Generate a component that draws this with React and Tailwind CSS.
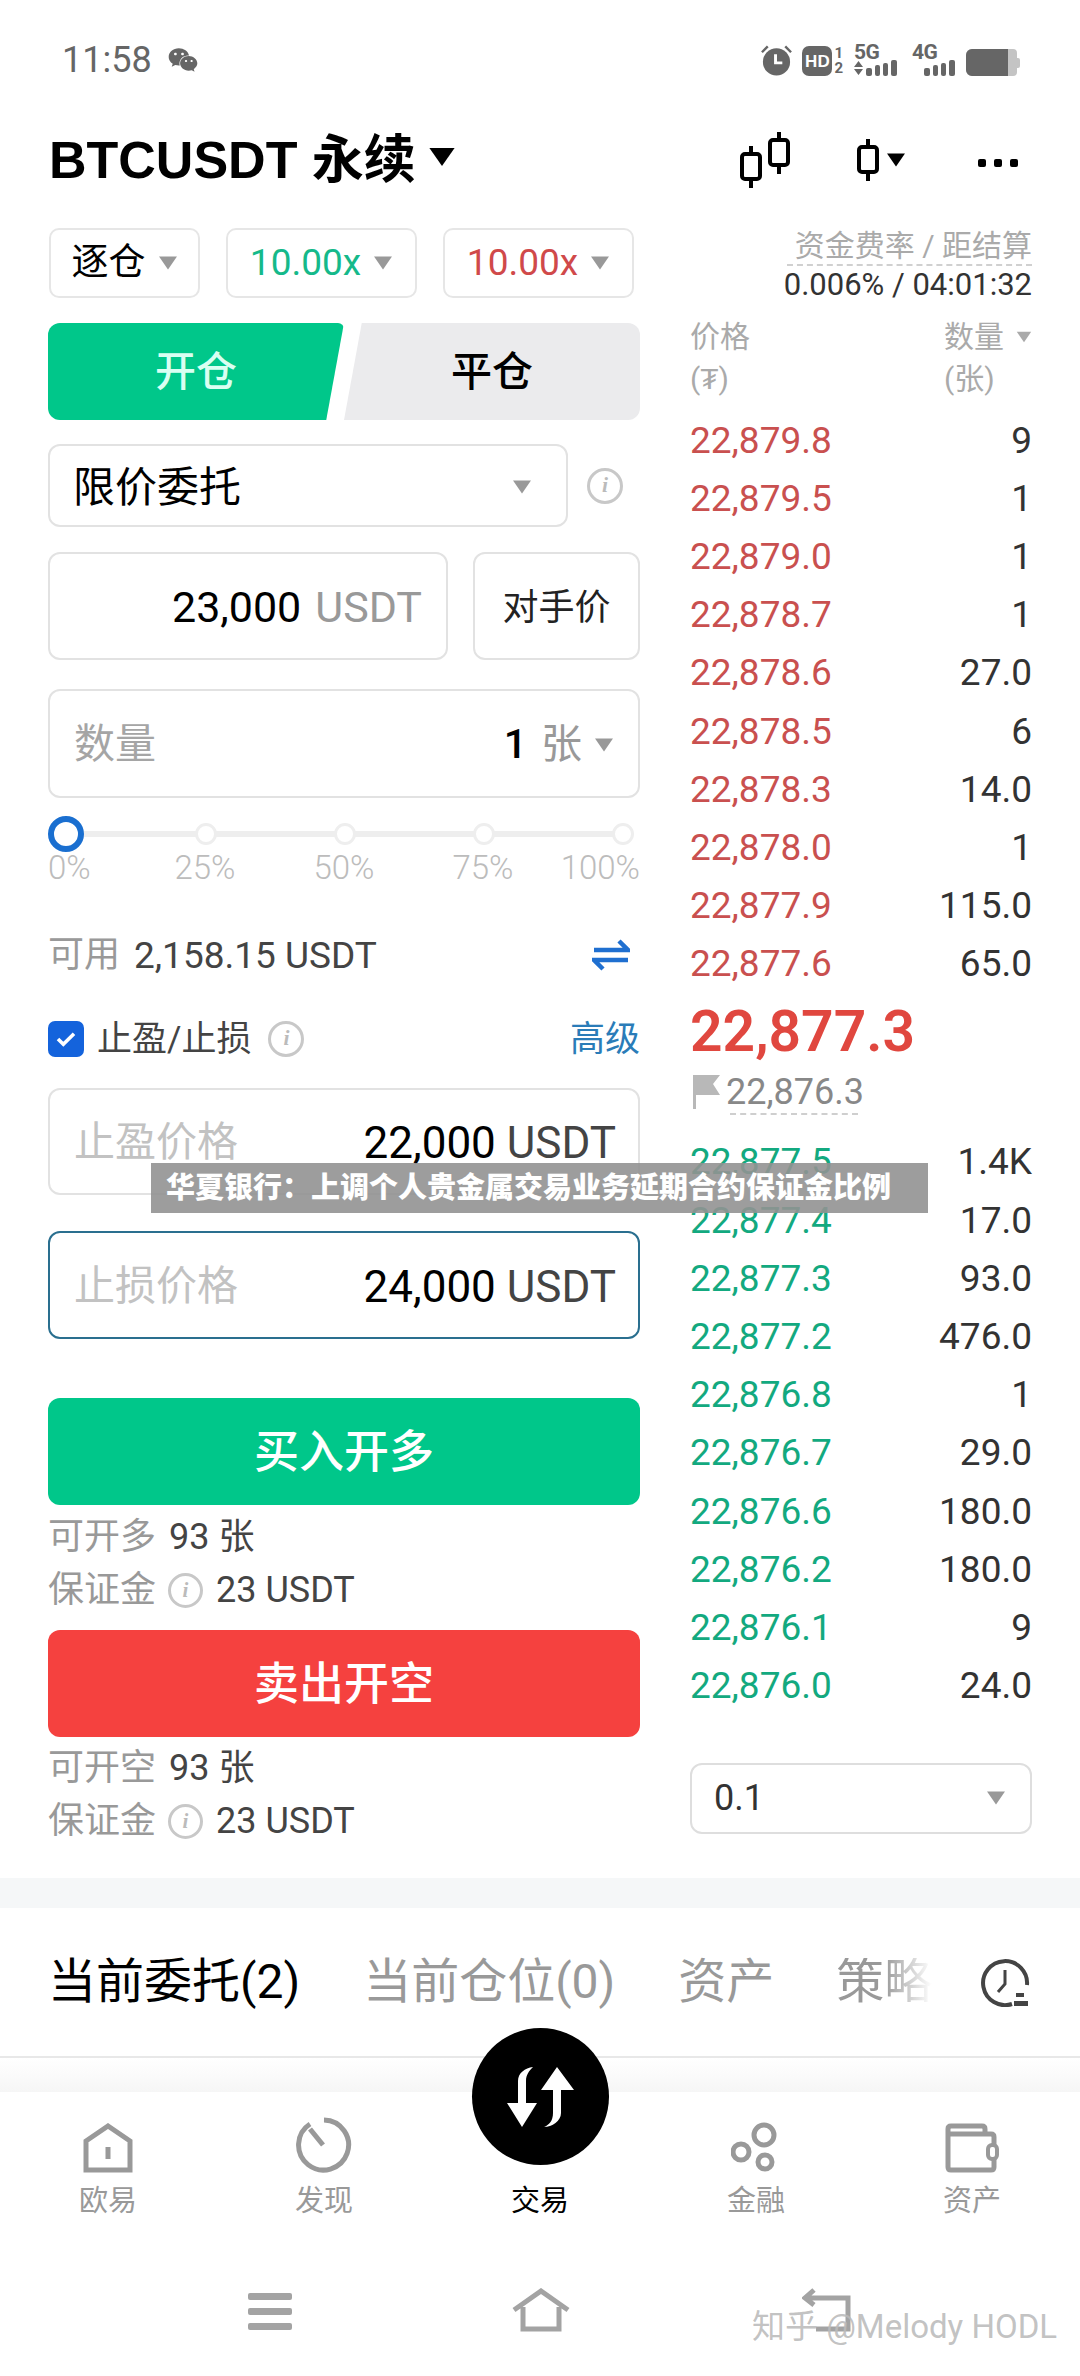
import { FaWeixin } from 'react-icons/fa';

const ASKS = [
  ['22,879.8', '9'], ['22,879.5', '1'], ['22,879.0', '1'], ['22,878.7', '1'], ['22,878.6', '27.0'],
  ['22,878.5', '6'], ['22,878.3', '14.0'], ['22,878.0', '1'], ['22,877.9', '115.0'], ['22,877.6', '65.0'],
];

const BIDS = [
  ['22,877.5', '1.4K'], ['22,877.4', '17.0'], ['22,877.3', '93.0'], ['22,877.2', '476.0'], ['22,876.8', '1'],
  ['22,876.7', '29.0'], ['22,876.6', '180.0'], ['22,876.2', '180.0'], ['22,876.1', '9'], ['22,876.0', '24.0'],
];

function Caret({ className = 'w-[20px] h-[14px] text-[#999]' }) {
  return (
    <svg viewBox="0 0 20 14" className={`shrink-0 ${className}`}>
      <path d="M1 0.5h18L10 13.5z" fill="currentColor" />
    </svg>
  );
}

function InfoIcon({ size = 36 }) {
  return (
    <span
      className="shrink-0 flex items-center justify-center rounded-full border-[3px] border-[#c8c8c8] text-[#bbb] font-['Liberation_Serif',serif] italic font-bold"
      style={{ width: size, height: size, fontSize: size * 0.6 }}
    >
      i
    </span>
  );
}

function Candle({ className }) {
  return (
    <svg viewBox="0 0 22 42" className={className}>
      <path d="M11 0v42" stroke="#000" strokeWidth="4" />
      <rect x="2" y="8" width="18" height="25" rx="3" fill="#fff" stroke="#000" strokeWidth="4" />
    </svg>
  );
}

function Bars() {
  return (
    <span className="flex items-end gap-[3px]">
      <span className="w-[6px] h-[8px] rounded-[2px] bg-[#666]" />
      <span className="w-[5px] h-[11px] rounded-[2px] bg-[#666]" />
      <span className="w-[5px] h-[13px] rounded-[2px] bg-[#666]" />
      <span className="w-[6px] h-[16px] rounded-[2px] bg-[#666]" />
    </span>
  );
}

function StatusBar() {
  return (
    <div className="h-[120px] pl-[62px] pr-[60px] flex items-center justify-between">
      <div className="flex items-center gap-[16px]">
        <span className="text-[36px] text-[#666]">11:58</span>
        <FaWeixin className="text-[30px] text-[#666]" />
      </div>
      <div className="flex items-end h-[32px]">
        <svg viewBox="0 0 34 32" className="w-[33px] h-[32px]">
          <path d="M2 8l6-6M32 8l-6-6" stroke="#666" strokeWidth="2.5" />
          <circle cx="17" cy="18" r="14" fill="#666" />
          <path d="M16 10v9h7" stroke="#fff" strokeWidth="3" fill="none" />
        </svg>
        <span className="ml-[9px] flex items-end gap-[2px]">
          <span className="w-[30px] h-[30px] rounded-[7px] bg-[#666] flex items-center justify-center text-white text-[17px] font-bold font-['Liberation_Sans',sans-serif] leading-none">HD</span>
          <span className="flex flex-col items-center text-[#666] text-[15px] font-bold leading-[15px]"><span>1</span><span>2</span></span>
        </span>
        <span className="ml-[11px] w-[45px] flex flex-col items-start text-[#666]">
          <span className="text-[21px] font-bold leading-[16px] tracking-[-0.5px]">5G</span>
          <span className="flex items-end gap-[3px]">
            <svg viewBox="0 0 9 16" className="w-[9px] h-[16px]">
              <path d="M4.5 1L9 7H0zM0 9h9l-4.500 6z" fill="#666" />
            </svg>
            <Bars />
          </span>
        </span>
        <span className="ml-[13px] w-[44px] flex flex-col items-start text-[#666]">
          <span className="text-[21px] font-bold leading-[16px] tracking-[-0.5px]">4G</span>
          <span className="ml-[12px]"><Bars /></span>
        </span>
        <span className="ml-[10px] flex items-center">
          <span className="w-[51px] h-[27px] rounded-l-[6px] flex overflow-hidden bg-[#c4c4c4] rounded-r-[4px]">
            <span className="w-[42px] bg-[#666]" />
          </span>
          <span className="w-[3px] h-[10px] bg-[#c4c4c4] rounded-r-[2px]" />
        </span>
      </div>
    </div>
  );
}

function Header() {
  return (
    <div className="h-[80px] pl-[49px] pr-[62px] flex items-center">
      <span className="text-[52px] font-bold text-black font-['Liberation_Sans','Noto_Sans_CJK_SC',sans-serif] leading-none">BTCUSDT 永续</span>
      <Caret className="w-[28px] h-[20px] text-black ml-[12px] -mt-[6px]" />
      <div className="ml-auto flex items-center">
        <span className="relative w-[50px] h-[56px] block">
          <Candle className="absolute left-0 bottom-0 w-[22px] h-[42px]" />
          <Candle className="absolute right-0 top-0 w-[22px] h-[42px]" />
        </span>
        <Candle className="w-[22px] h-[42px] ml-[67px]" />
        <Caret className="w-[20px] h-[14px] text-black ml-[7px]" />
        <span className="flex gap-[8px] ml-[72px] mt-[6px]">
          <span className="w-[8px] h-[8px] rounded-[2px] bg-black" />
          <span className="w-[8px] h-[8px] rounded-[2px] bg-black" />
          <span className="w-[8px] h-[8px] rounded-[2px] bg-black" />
        </span>
      </div>
    </div>
  );
}

function Pill({ className, children }) {
  return (
    <div className={`h-[70px] border-2 border-[#e6e6e6] rounded-[10px] flex items-center justify-center gap-[12px] text-[37px] ${className}`}>
      {children}
      <Caret />
    </div>
  );
}

function Field({ className = '', children }) {
  return (
    <div className={`border-2 border-[#e2e2e2] rounded-[12px] pt-[3px] flex items-center ${className}`}>
      {children}
    </div>
  );
}

function Slider() {
  return (
    <div className="mt-[18px]">
      <div className="relative h-[36px] flex items-center justify-between">
        <span className="absolute left-[10px] right-[8px] h-[6px] bg-[#eeeeee]" />
        <span className="relative w-[36px] h-[36px] rounded-full border-[6px] border-[#1a6fd0] bg-white" />
        {[0, 1, 2, 3].map((i) => (
          <span key={i} className="relative w-[22px] h-[22px] rounded-full border-[3px] border-[#eeeeee] bg-white mr-[6px]" />
        ))}
      </div>
      <div className="h-[32px] flex text-[33px] leading-[32px] text-[#bcbcbc] font-light">
        <span className="w-[94px]">0%</span>
        <span className="w-[126px] text-center">25%</span>
        <span className="w-[152px] text-center">50%</span>
        <span className="w-[126px] text-center">75%</span>
        <span className="flex-1 text-right">100%</span>
      </div>
    </div>
  );
}

function Margin({ label, qty, withInfo, className }) {
  return (
    <div className={`h-[40px] flex items-center text-[36px] text-[#999] leading-none ${className}`}>
      <span>{label}</span>
      {withInfo ? <span className="ml-[12px]"><InfoIcon size={35} /></span> : null}
      <span className="ml-[13px] text-[#444]">{qty}</span>
    </div>
  );
}

function LeftColumn() {
  return (
    <div className="w-[592px] flex flex-col">
      <div className="flex gap-[26px] pl-[1px]">
        <Pill className="w-[151px] text-black">逐仓</Pill>
        <Pill className="w-[191px] text-[#15b98a]">10.00x</Pill>
        <Pill className="w-[191px] text-[#d0494a]">10.00x</Pill>
      </div>

      <div className="mt-[25px] h-[97px] flex relative">
        <div className="w-[296px] pt-[3px] rounded-l-[12px] rounded-tr-[6px] bg-[#00c78a] [clip-path:polygon(0_0,100%_0,94%_100%,0_100%)] flex items-center justify-center text-[41px] text-[#d9fff2] font-medium">开仓</div>
        <div className="w-[296px] pt-[3px] rounded-r-[12px] bg-[#ebebed] [clip-path:polygon(6%_0,100%_0,100%_100%,0_100%)] flex items-center justify-center text-[41px] text-black font-medium">平仓</div>
      </div>

      <div className="mt-[24px] flex items-center">
        <Field className="w-[520px] h-[83px] pl-[23px] pr-[34px] justify-between">
          <span className="text-[42px] text-black">限价委托</span>
          <Caret />
        </Field>
        <span className="ml-[19px]"><InfoIcon /></span>
      </div>

      <div className="mt-[25px] flex justify-between">
        <Field className="w-[400px] h-[108px] pr-[24px] justify-end text-[43px]">
          <span className="text-black">23,000</span>
          <span className="text-[#999] ml-[14px]">USDT</span>
        </Field>
        <Field className="w-[167px] h-[108px] justify-center text-[36px] text-[#222]">对手价</Field>
      </div>

      <Field className="mt-[29px] h-[109px] pl-[24px] pr-[24px] text-[41px]">
        <span className="text-[#a5a5a5]">数量</span>
        <span className="ml-auto text-black font-medium">1</span>
        <span className="ml-[14px] text-[#999]">张</span>
        <span className="ml-[12px]"><Caret /></span>
      </Field>

      <Slider />

      <div className="mt-[51px] h-[40px] flex items-center text-[36px] leading-none">
        <span className="text-[#999]">可用</span>
        <span className="ml-[14px] text-[#444] text-[37px]">2,158.15 USDT</span>
        <svg viewBox="0 0 38 32" className="ml-auto mr-[10px] w-[38px] h-[32px]">
          <path d="M2 11h34L27 2M36 21H2l9 9" fill="none" stroke="#1f6fd0" strokeWidth="4.5" />
        </svg>
      </div>

      <div className="mt-[44px] h-[40px] flex items-center text-[35px] leading-none">
        <span className="w-[36px] h-[36px] rounded-[7px] bg-[#1463dc] flex items-center justify-center">
          <svg viewBox="0 0 22 18" className="w-[20px] h-[16px]">
            <path d="M2 9l6 6L20 3" fill="none" stroke="#fff" strokeWidth="4" />
          </svg>
        </span>
        <span className="ml-[13px] text-[#444]">止盈/止损</span>
        <span className="ml-[17px]"><InfoIcon /></span>
        <span className="ml-auto text-[#2a7cb8]">高级</span>
      </div>

      <Field className="mt-[29px] h-[107px] pl-[24px] pr-[22px] justify-between text-[41px]">
        <span className="text-[#c2c2c2]">止盈价格</span>
        <span className="text-[44px]"><span className="text-black">22,000</span> <span className="text-[#444]">USDT</span></span>
      </Field>
      <div className="mt-[36px] h-[108px] pt-[3px] border-2 border-[#2a6f8f] rounded-[12px] pl-[24px] pr-[22px] flex items-center justify-between text-[41px]">
        <span className="text-[#c2c2c2]">止损价格</span>
        <span className="text-[44px]"><span className="text-black">24,000</span> <span className="text-[#444]">USDT</span></span>
      </div>

      <div className="mt-[59px] h-[107px] pt-[3px] rounded-[12px] bg-[#00c78a] flex items-center justify-center text-[45px] text-white font-medium">买入开多</div>
      <Margin label="可开多" qty="93 张" className="mt-[12px]" />
      <Margin label="保证金" qty="23 USDT" withInfo className="mt-[13px]" />
      <div className="mt-[20px] h-[107px] pt-[3px] rounded-[12px] bg-[#f5413f] flex items-center justify-center text-[45px] text-white font-medium">卖出开空</div>
      <Margin label="可开空" qty="93 张" className="mt-[11px]" />
      <Margin label="保证金" qty="23 USDT" withInfo className="mt-[13px]" />
    </div>
  );
}

function BookRow({ price, qty, color }) {
  return (
    <div className="h-[58.2px] flex items-center justify-between text-[37px] leading-none">
      <span className={color}>{price}</span>
      <span className="text-[#333]">{qty}</span>
    </div>
  );
}

function RightColumn() {
  return (
    <div className="w-[342px] ml-[50px] mt-[1px] flex flex-col">
      <div className="flex flex-col items-end">
        <span className="text-[30px] leading-[34px] text-[#aaa] border-b-2 border-dashed border-[#d0d0d0] pb-[1px] pl-[8px]">资金费率 / 距结算</span>
        <span className="mt-[1px] text-[31px] leading-[36px] text-[#333]">0.006% / 04:01:32</span>
      </div>

      <div className="mt-[13px] h-[92px] flex justify-between text-[30px] leading-[42px] text-[#aaa]">
        <div className="flex flex-col">
          <span>价格</span>
          <span>(₮)</span>
        </div>
        <div className="flex flex-col w-[88px]">
          <span className="flex items-center justify-between">数量 <Caret className="w-[16px] h-[12px] text-[#aaa]" /></span>
          <span>(张)</span>
        </div>
      </div>

      <div className="mt-[3px]">
        {ASKS.map(([price, qty]) => (
          <BookRow key={price} price={price} qty={qty} color="text-[#c9504f]" />
        ))}
      </div>

      <div className="mt-[4px] h-[70px] flex items-center text-[57px] leading-none font-semibold text-[#e0473f]">22,877.3</div>
      <div className="mt-[4px] h-[42px] flex items-center">
        <svg viewBox="0 0 28 34" className="w-[28px] h-[34px] ml-[3px]">
          <path d="M0 0h27l-7 9 7 11H3v14H0z" fill="#b8b8b8" />
        </svg>
        <span className="ml-[5px] text-[36px] leading-none text-[#888]">22,876.3</span>
      </div>
      <div className="ml-[40px] w-[128px] border-t-2 border-dashed border-[#cfcfcf]" />

      <div className="mt-[18px]">
        {BIDS.map(([price, qty]) => (
          <BookRow key={price} price={price} qty={qty} color="text-[#13a97f]" />
        ))}
      </div>

      <div className="mt-[48px] h-[71px] border-2 border-[#dedede] rounded-[12px] pl-[22px] pr-[24px] flex items-center justify-between text-[36px] text-[#333]">
        <span>0.1</span>
        <Caret />
      </div>
    </div>
  );
}

function Tabs() {
  return (
    <div className="h-[148px] pl-[48px] pr-[50px] flex items-center border-b-2 border-[#e8e8e8] text-[48px] leading-none box-content">
      <span className="text-black">当前委托(2)</span>
      <span className="ml-[63px] text-[#999]">当前仓位(0)</span>
      <span className="ml-[63px] text-[#999]">资产</span>
      <span className="ml-[62px] bg-gradient-to-r from-[#999] from-50% to-transparent bg-clip-text text-transparent">策略</span>
      <svg viewBox="0 0 50 50" className="ml-auto w-[50px] h-[50px]">
        <path d="M32 47A22 22 0 1 1 47 28" fill="none" stroke="#444" strokeWidth="4" />
        <path d="M25 13v14l-7 8" fill="none" stroke="#444" strokeWidth="3" />
        <path d="M36 36h8v4h-8zM34 44h14v5H34z" fill="#444" />
      </svg>
    </div>
  );
}

const NAV_ICONS = {
  home: (
    <svg viewBox="0 0 50 50" className="w-[50px] h-[50px]">
      <path d="M3 47V18L25 3l22 15v29z" fill="none" stroke="#999" strokeWidth="5" />
      <path d="M25 24v12" stroke="#999" strokeWidth="5" />
    </svg>
  ),
  discover: (
    <svg viewBox="0 0 56 56" className="w-[56px] h-[56px] -mt-[6px]">
      <path d="M14 7A25 25 0 1 0 28 3" fill="none" stroke="#999" strokeWidth="5" />
      <path d="M14 12l13 16" stroke="#999" strokeWidth="5" />
    </svg>
  ),
  finance: (
    <svg viewBox="0 0 50 52" className="w-[50px] h-[52px] -mt-[1px]">
      <circle cx="33" cy="13" r="10" fill="none" stroke="#999" strokeWidth="5" />
      <circle cx="10" cy="30" r="8" fill="none" stroke="#999" strokeWidth="5" />
      <circle cx="34" cy="40" r="7" fill="none" stroke="#999" strokeWidth="5" />
    </svg>
  ),
  wallet: (
    <svg viewBox="0 0 56 50" className="w-[56px] h-[50px]">
      <path d="M4 10V6q0-3 3-3h31q3 0 3 3v5M50 22v-8q0-3-3-3H4v33q0 3 3 3h40q3 0 3-3V36" fill="none" stroke="#999" strokeWidth="5" />
      <rect x="44" y="22" width="9" height="14" rx="4" fill="#fff" stroke="#999" strokeWidth="4" />
    </svg>
  ),
};

function BottomNav() {
  const items = [
    { key: 'home', label: '欧易' },
    { key: 'discover', label: '发现' },
    { key: 'trade', label: '交易' },
    { key: 'finance', label: '金融' },
    { key: 'wallet', label: '资产' },
  ];
  return (
    <div className="grid grid-cols-5 pt-[31px]">
      {items.map((item) => (
        <div key={item.key} className="flex flex-col items-center">
          <div className="h-[50px] flex items-start justify-center">{NAV_ICONS[item.key]}</div>
          <span className={`mt-[8px] h-[40px] leading-[40px] text-[29px] ${item.key === 'trade' ? 'text-black' : 'text-[#999]'}`}>{item.label}</span>
        </div>
      ))}
    </div>
  );
}

function SystemNav() {
  return (
    <div className="mt-[65px] h-[48px] flex items-center pl-[248px]">
      <span className="w-[44px] flex flex-col gap-[8px] mt-[3px]">
        <span className="h-[7px] rounded-[2px] bg-[#a3a3a3]" />
        <span className="h-[7px] rounded-[2px] bg-[#a3a3a3]" />
        <span className="h-[7px] rounded-[2px] bg-[#a3a3a3]" />
      </span>
      <svg viewBox="0 0 58 44" className="ml-[220px] w-[58px] h-[44px]">
        <path d="M2 22L29 3l27 19M11 19v22h36V19" fill="none" stroke="#a3a3a3" strokeWidth="5" />
      </svg>
      <svg viewBox="0 0 50 44" className="ml-[232px] w-[50px] h-[44px]">
        <path d="M12 2L3 10l9 7M4 10h42v31H14" fill="none" stroke="#a3a3a3" strokeWidth="5" />
      </svg>
    </div>
  );
}

export default function App() {
  return (
    <div className="relative w-[1080px] h-[2376px] overflow-hidden bg-white font-[Roboto,'Noto_Sans_CJK_SC',sans-serif]">
      <StatusBar />
      <Header />

      <div className="mt-[28px] px-[48px] flex">
        <LeftColumn />
        <RightColumn />
      </div>

      <div className="mt-[37px] h-[30px] bg-[#f5f7f8]" />
      <Tabs />
      <div className="h-[34px] bg-gradient-to-b from-white to-[#f6f6f6]" />
      <BottomNav />
      <SystemNav />

      {/* trade button sits over the tab line */}
      <div className="absolute left-[472px] top-[2028px] w-[137px] h-[137px] rounded-full bg-black flex items-center justify-center">
        <svg viewBox="0 0 67 60" className="w-[67px] h-[60px]">
          <path d="M0 36h30L15 60zM11 36V14C11 6 18 1 26 0c-4 4-7 8-7 14v22z" fill="#fff" />
          <path d="M34 23h33L50 0zM46 23v23c0 8-4 12-9 14 8 0 17-6 17-14V23z" fill="#fff" />
        </svg>
      </div>

      {/* headline banner and watermark laid over the screenshot */}
      <div className="absolute left-[151px] top-[1163px] w-[777px] h-[50px] bg-[#929292]/90 pl-[15px] flex items-center text-[29px] leading-none font-black text-white whitespace-nowrap">
        华夏银行：上调个人贵金属交易业务延期合约保证金比例
      </div>
      <div className="absolute left-[752px] top-[2304px] text-[33px] leading-[46px] text-[#bbbbbb]/90 whitespace-nowrap">
        知乎 @Melody HODL
      </div>
    </div>
  );
}
